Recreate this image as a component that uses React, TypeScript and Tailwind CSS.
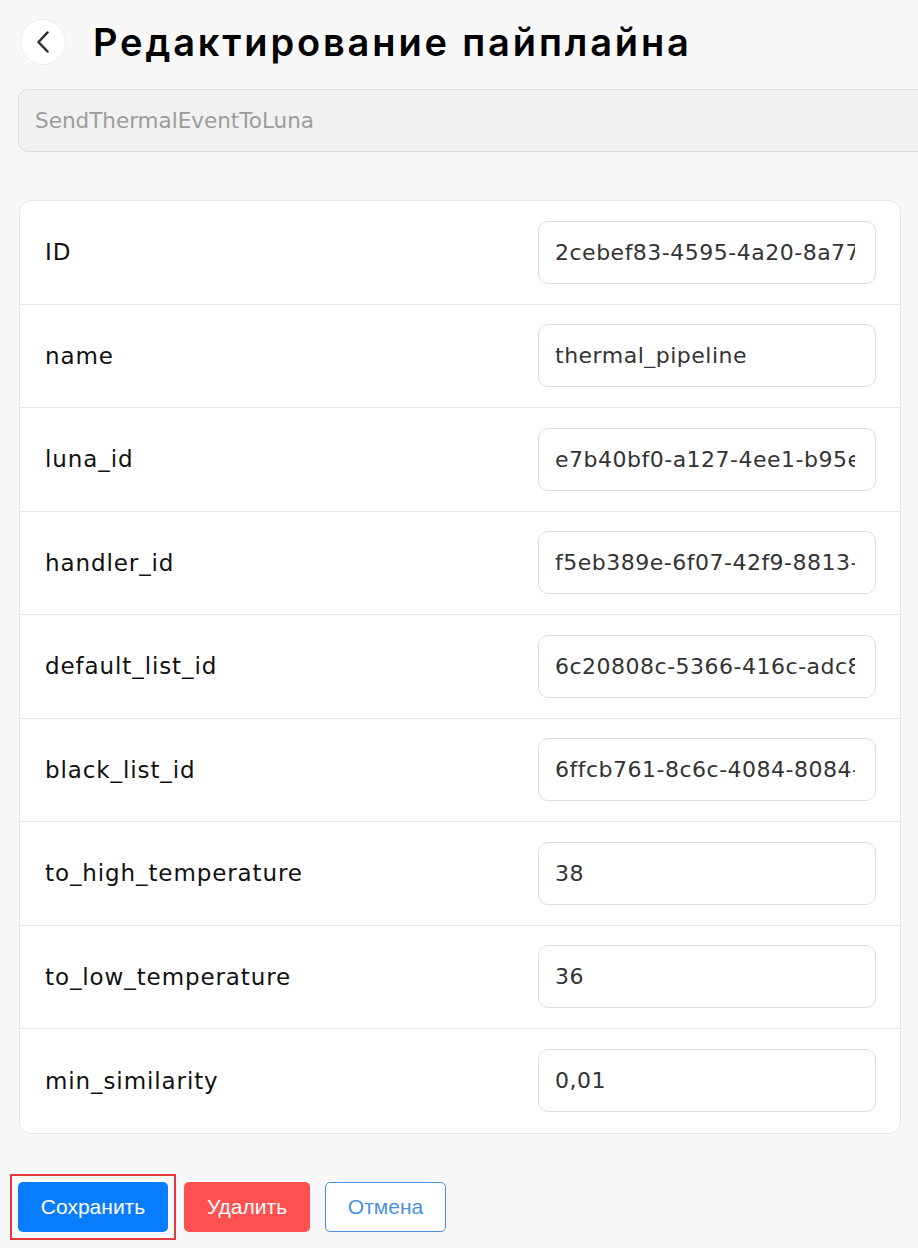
const fields = [
  { key: "ID", value: "2cebef83-4595-4a20-8a77-3c1d0e9b4f21" },
  { key: "name", value: "thermal_pipeline" },
  { key: "luna_id", value: "e7b40bf0-a127-4ee1-b95e-7d02c41a9f63" },
  { key: "handler_id", value: "f5eb389e-6f07-42f9-8813-0a6e2d5c71b8" },
  { key: "default_list_id", value: "6c20808c-5366-416c-adc8-91f4e03b2a57" },
  { key: "black_list_id", value: "6ffcb761-8c6c-4084-8084-2b7a95d1e0c3" },
  { key: "to_high_temperature", value: "38" },
  { key: "to_low_temperature", value: "36" },
  { key: "min_similarity", value: "0,01" },
];

export default function App() {
  return (
    <div className="min-h-[1248px] w-[918px] overflow-hidden bg-[#f8f8f8] font-['DejaVu_Sans',sans-serif]">
      <div className="flex h-[86px] items-center pb-[2px] pl-5">
        <button className="flex h-[46px] w-[46px] items-center justify-center rounded-full border border-[#ececec] bg-white">
          <svg width="14" height="22" viewBox="0 0 14 22" fill="none">
            <path d="M11.5 1.5 2.5 11l9 9.5" stroke="#2b2b2b" strokeWidth="2.5" strokeLinecap="round" strokeLinejoin="round" />
          </svg>
        </button>
        <h1 className="ml-[27px] font-['Inter',sans-serif] text-[38px] font-semibold leading-none tracking-[2.85px] text-black">
          Редактирование пайплайна
        </h1>
      </div>

      <div className="pl-[18px]">
        <input
          readOnly
          value="SendThermalEventToLuna"
          className="mt-[3px] h-[63px] w-[920px] rounded-[10px] border border-[#dcdcdc] bg-[#f1f1f1] px-4 text-[21.5px] text-[#9c9c9c] outline-none"
        />
      </div>

      <div className="ml-[19px] mt-[48px] w-[882px] rounded-xl border border-[#e6e6e6] bg-white">
        {fields.map((f, i) => (
          <div
            key={f.key}
            className={`flex h-[103.5px] items-center justify-between pl-[25px] pr-[24px] ${
              i < fields.length - 1 ? "border-b border-[#e8e8e8]" : ""
            }`}
          >
            <span className="text-[23px] tracking-[0.9px] text-[#111]">{f.key}</span>
            <input
              readOnly
              value={f.value}
              className="h-[63px] w-[338px] rounded-[10px] border border-[#dedede] bg-white pl-4 pr-5 text-[22px] tracking-[0.5px] text-[#333] outline-none"
            />
          </div>
        ))}
      </div>

      <div className="mt-[48px] flex gap-4 pl-[18px] font-['Liberation_Sans',Arial,sans-serif]">
        {/* focus ring drawn as a square frame around the save button */}
        <div className="-m-2 border-2 border-[#e23a3f] p-[6px]">
          <button className="block h-[50px] w-[150px] rounded-[5px] bg-[#0a7cff] text-[21px] text-white">
            Сохранить
          </button>
        </div>
        <button className="h-[50px] w-[126px] rounded-[5px] bg-[#fd5151] text-[21px] text-white">
          Удалить
        </button>
        <button className="-ml-px h-[50px] w-[121px] rounded-[5px] border border-[#4a90e2] bg-white text-[21px] text-[#4a90e2]">
          Отмена
        </button>
      </div>
    </div>
  );
}
